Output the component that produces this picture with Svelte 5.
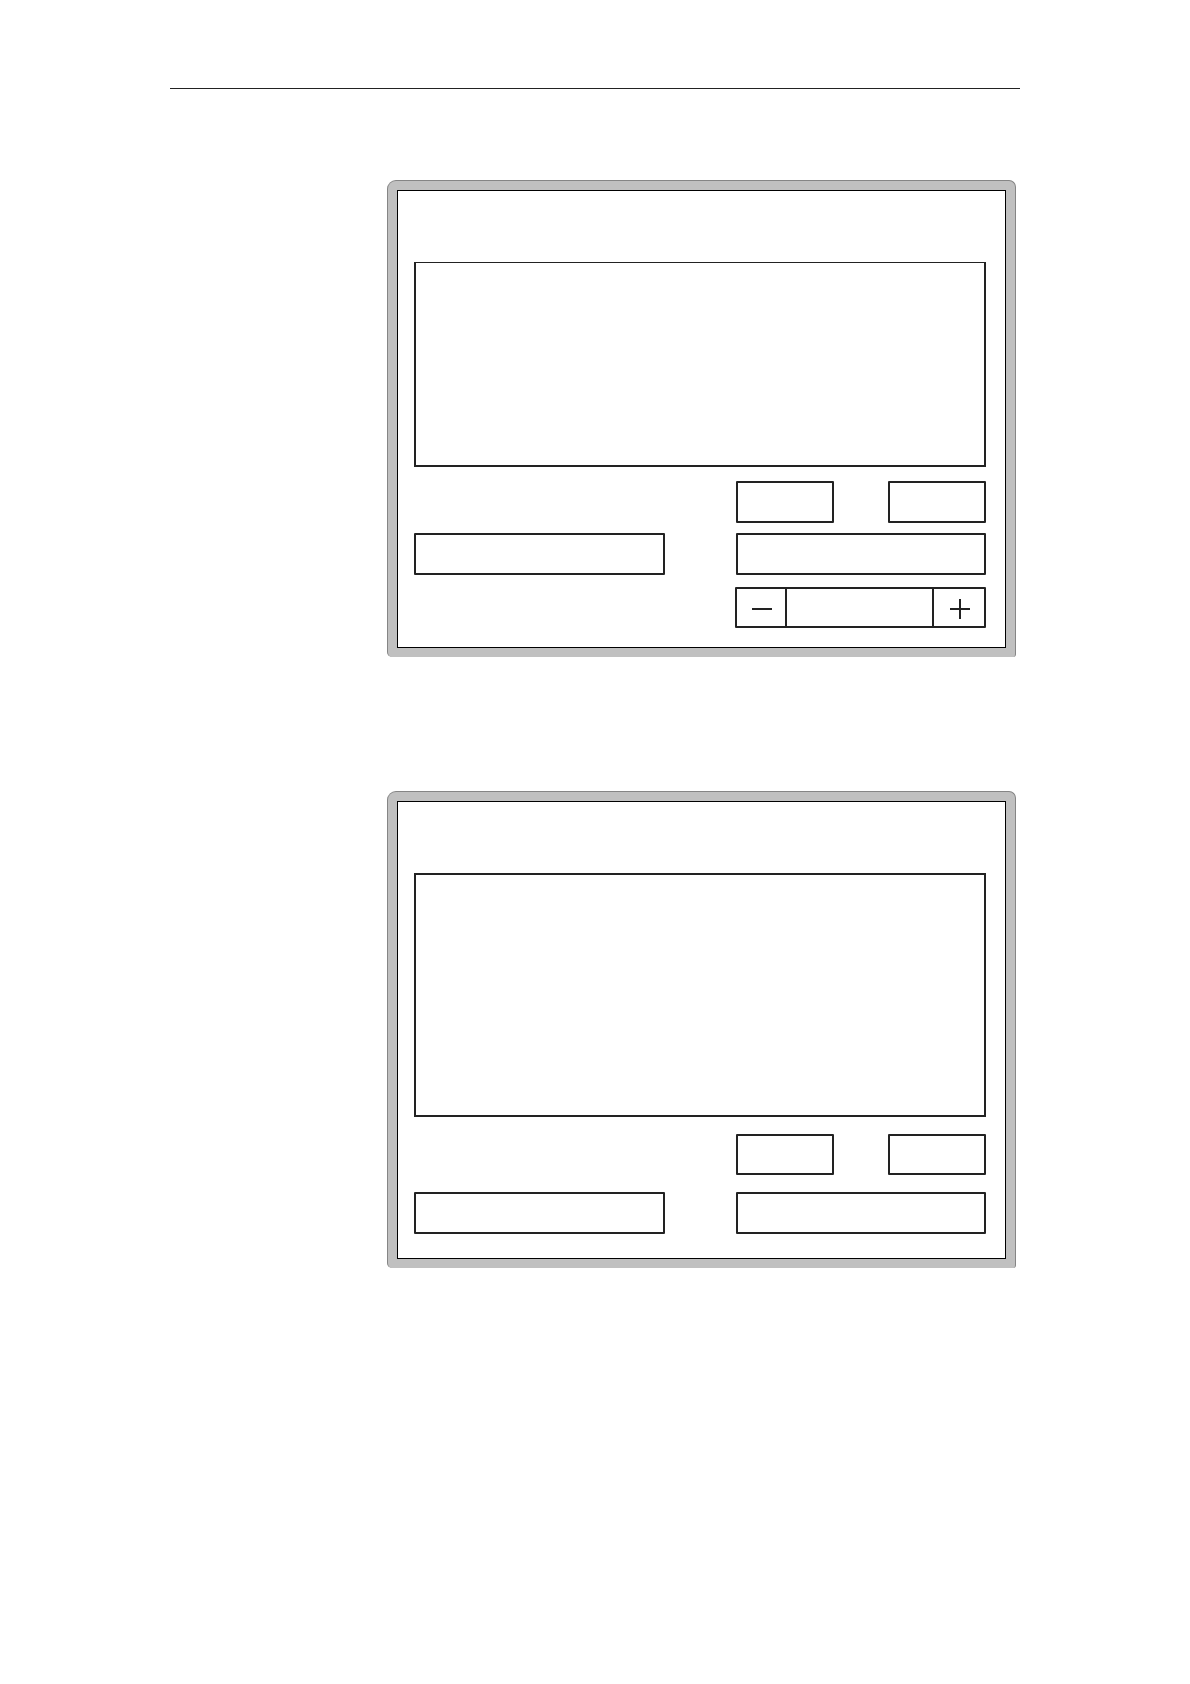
<script>
  // Two operating panels: a display area with its keys and fields below.
  // The first one also has a stepper (- value +).
  let value = $state('');

  const step = (d) => {
    value = String((Number(value) || 0) + d);
  };

  const panels = [
    { id: 'adjust', label: 'Panel with stepper', stepper: true },
    { id: 'plain', label: 'Panel', stepper: false }
  ];
</script>

<div class="page">
  <hr />
  <main>
    {#each panels as p (p.id)}
      <section class="frame" aria-label={p.label}>
        <div class="screen {p.id}">
          <div class="display"></div>
          <div class="keys">
            <button class="box" aria-label="Key 1"></button>
            <button class="box" aria-label="Key 2"></button>
          </div>
          <div class="fields">
            <button class="box" aria-label="Left key"></button>
            <button class="box" aria-label="Right key"></button>
          </div>
          {#if p.stepper}
            <div class="stepper">
              <button aria-label="Decrease" onclick={() => step(-1)}>
                <svg width="22" height="22" viewBox="0 0 22 22"><path d="M1 11H21" /></svg>
              </button>
              <input aria-label="Value" bind:value />
              <button aria-label="Increase" onclick={() => step(1)}>
                <svg width="22" height="22" viewBox="0 0 22 22"><path d="M1 11H21M11 1V21" /></svg>
              </button>
            </div>
          {/if}
        </div>
      </section>
    {/each}
  </main>
</div>

<style>
  :global(body) { margin: 0; background: #fff; }
  .page { padding: 88px 170px; font-family: "Liberation Sans", Arial, sans-serif; }
  hr { margin: 0; border: 0; height: 1px; background: #222; }
  main { display: flex; flex-direction: column; gap: 134px; margin: 91px 4px 0 217px; }

  .frame { padding: 9px; background: #c0c0c0; border: 1px solid #858585; border-bottom: 0; border-radius: 9px 7px 3px 5px; }
  .screen { display: flex; flex-direction: column; background: #fff; border: 1px solid #000; padding: 71px 19px 19px 16px; }
  .screen.plain { padding-bottom: 24px; }

  .display { box-sizing: border-box; height: 205px; margin-bottom: 14px; border: 2px solid #222; border-top-width: 1px; }
  .plain .display { height: 244px; margin-bottom: 17px; border-top-width: 2px; }

  .box { box-sizing: border-box; height: 42px; padding: 0; background: #fff; border: 2px solid #222; border-radius: 1px; }
  .keys { display: flex; justify-content: space-between; width: 250px; align-self: flex-end; }
  .keys .box { width: 98px; }
  .plain .keys .box { height: 41px; }
  .fields { display: grid; grid-template-columns: 1fr 250px; column-gap: 71px; margin-top: 10px; }
  .plain .fields { margin-top: 17px; }

  .stepper { box-sizing: border-box; display: grid; grid-template-columns: 50px 1fr 52px; width: 251px; height: 41px; margin-top: 12px; align-self: flex-end; border: 2px solid #222; border-radius: 1px; }
  .stepper button { display: flex; align-items: center; justify-content: center; padding: 3px 0 0 2px; background: #fff; border: 0; }
  .stepper button:first-child { border-right: 2px solid #222; }
  .stepper button:last-child { border-left: 2px solid #222; }
  .stepper input { min-width: 0; padding: 0 8px; border: 0; font: inherit; text-align: center; }
  svg { display: block; fill: none; stroke: #222; stroke-width: 2; }
</style>
